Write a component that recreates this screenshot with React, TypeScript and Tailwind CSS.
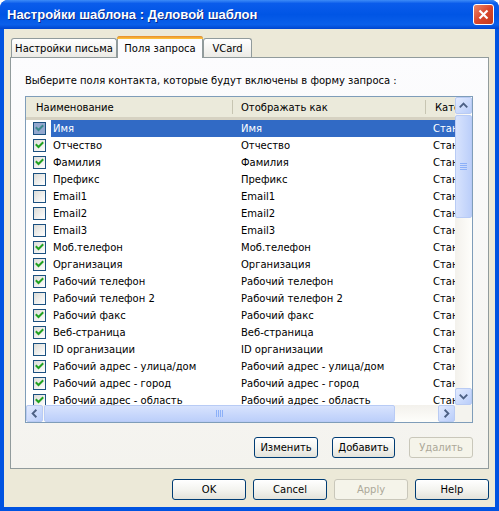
import React from 'react';

const rows: [string, boolean][] = [
  ['Имя', true],
  ['Отчество', true],
  ['Фамилия', true],
  ['Префикс', false],
  ['Email1', false],
  ['Email2', false],
  ['Email3', false],
  ['Моб.телефон', true],
  ['Организация', true],
  ['Рабочий телефон', true],
  ['Рабочий телефон 2', false],
  ['Рабочий факс', true],
  ['Веб-страница', true],
  ['ID организации', false],
  ['Рабочий адрес - улица/дом', true],
  ['Рабочий адрес - город', true],
  ['Рабочий адрес - область', true],
];

function Checkbox({ checked, active }: { checked: boolean; active?: boolean }) {
  return (
    <div
      className={
        active
          ? 'w-[13px] h-[13px] border border-[#1C5180] bg-[#93A8CE] flex items-center justify-center'
          : 'w-[13px] h-[13px] border border-[#1C5180] bg-gradient-to-br from-[#DCDCD7] to-white flex items-center justify-center'
      }
    >
      {checked && (
        <svg width="11" height="11" viewBox="0 0 11 11">
          <polyline
            points="2.5,5 4.5,7 8.5,3"
            fill="none"
            stroke={active ? '#3A8A8C' : '#21A121'}
            strokeWidth="2"
            strokeLinecap="square"
          />
        </svg>
      )}
    </div>
  );
}

function Chevron({ dir }: { dir: 'up' | 'down' | 'left' | 'right' }) {
  const pts = {
    up: '4,10 8,6 12,10',
    down: '4,6 8,10 12,6',
    left: '10,4 6,8 10,12',
    right: '6,4 10,8 6,12',
  }[dir];
  return (
    <svg width="15" height="15" viewBox="0 0 16 16">
      <polyline points={pts} fill="none" stroke="#4D6185" strokeWidth="2" />
    </svg>
  );
}

function ScrollBtn({ dir }: { dir: 'up' | 'down' | 'left' | 'right' }) {
  return (
    <div className="w-[17px] h-[17px] shrink-0 rounded-[2px] border border-[#B9CBF3] bg-gradient-to-br from-[#E3EBFE] to-[#B9CDFA] flex items-center justify-center">
      <Chevron dir={dir} />
    </div>
  );
}

function Btn({ label, disabled, className }: { label: string; disabled?: boolean; className: string }) {
  return (
    <div
      className={
        (disabled
          ? 'border-[#C9C7BA] text-[#ACA899] bg-[#F5F4EA] '
          : 'border-[#003C74] text-black bg-gradient-to-b from-white via-[#F4F4F0] to-[#E3E2DA] ') +
        'h-[21px] rounded-[3px] border flex items-center justify-center ' +
        className
      }
    >
      {label}
    </div>
  );
}

export default function App() {
  return (
    <div className="w-[499px] h-[511px] flex flex-col bg-[#0053E1] rounded-t-[8px] overflow-hidden font-['DejaVu_Sans',sans-serif] text-[10px] text-black">
      {/* Title bar */}
      <div className="h-[29px] shrink-0 flex items-center pl-[7px] pr-[5px] bg-[linear-gradient(to_bottom,#3D8BF7_0%,#0A5CEB_12%,#0055E5_50%,#0A5FEA_85%,#0045CF_100%)]">
        <span className="text-white font-['Liberation_Sans',sans-serif] font-bold text-[13px] [text-shadow:1px_1px_#0A2A8A] pt-[1px]">
          Настройки шаблона : Деловой шаблон
        </span>
        <div className="ml-auto w-[21px] h-[21px] rounded-[3px] border border-white bg-gradient-to-br from-[#E9866A] via-[#D9462C] to-[#C23A1E] flex items-center justify-center">
          <svg width="13" height="13" viewBox="0 0 13 13">
            <path d="M2.5 2.5 L10.5 10.5 M10.5 2.5 L2.5 10.5" stroke="white" strokeWidth="2.2" />
          </svg>
        </div>
      </div>

      {/* Body */}
      <div className="flex-1 mx-[4px] mb-[4px] bg-[#ECE9D8] flex flex-col pt-[7px] px-[6px]">
        {/* Tabs */}
        <div className="flex items-end h-[21px] pl-[1px]">
          <div className="w-[106px] h-[19px] rounded-t-[3px] border border-b-0 border-[#919B9C] bg-gradient-to-b from-white to-[#ECEBE6] flex items-center justify-center">
            Настройки письма
          </div>
          <div className="relative z-10 w-[86px] h-[22px] -mb-[1px] rounded-t-[3px] border border-b-0 border-[#919B9C] bg-[#FCFCFE] flex flex-col">
            <div className="h-[3px] -mx-[1px] -mt-[1px] rounded-t-[3px] bg-gradient-to-b from-[#E68B2C] to-[#FFC73C]" />
            <div className="flex-1 flex items-center justify-center pb-[1px]">Поля запроса</div>
          </div>
          <div className="w-[49px] h-[19px] rounded-t-[3px] border border-b-0 border-[#919B9C] bg-gradient-to-b from-white to-[#ECEBE6] flex items-center justify-center">
            VCard
          </div>
        </div>

        {/* Tab panel */}
        <div className="border border-[#919B9C] bg-gradient-to-b from-[#FCFCFE] to-[#F4F3EE] pt-[16px] pl-[14px] pr-[15px] pb-[10px] flex flex-col">
          <div className="h-[13px] leading-[13px] whitespace-nowrap">
            Выберите поля контакта, которые будут включены в форму запроса :
          </div>

          {/* List view */}
          <div className="mt-[9px] h-[327px] border border-[#7F9DB9] bg-white flex flex-col">
            <div className="flex h-[308px]">
              <div className="flex-1 flex flex-col overflow-hidden">
                {/* Header */}
                <div className="h-[23px] shrink-0 flex bg-[#EBEADB] border-b-[3px] border-[#D6D2C2] whitespace-nowrap">
                  <div className="w-[207px] shrink-0 flex items-center justify-between pl-[10px]">
                    <span>Наименование</span>
                    <div className="w-[1px] h-[14px] bg-[#C7C5B2]" />
                  </div>
                  <div className="w-[193px] shrink-0 flex items-center justify-between pl-[8px]">
                    <span>Отображать как</span>
                    <div className="w-[1px] h-[14px] bg-[#C7C5B2]" />
                  </div>
                  <div className="flex-1 flex items-center pl-[9px]">Категория</div>
                </div>
                {/* Rows */}
                {rows.map(([name, checked], i) => (
                  <div key={name} className="h-[17px] shrink-0 flex items-center whitespace-nowrap">
                    <div className="w-[25px] shrink-0 pl-[7px]">
                      <Checkbox checked={checked} active={i === 0} />
                    </div>
                    <div className={i === 0 ? 'flex-1 h-full flex items-center bg-[#316AC5] text-white' : 'flex-1 h-full flex items-center'}>
                      <div className="w-[182px] shrink-0 pl-[2px]">{name}</div>
                      <div className="w-[193px] shrink-0 pl-[8px]">{name}</div>
                      <div className="flex-1 pl-[7px] overflow-hidden">Стандартное</div>
                    </div>
                  </div>
                ))}
              </div>
              {/* Vertical scrollbar */}
              <div className="w-[17px] shrink-0 flex flex-col bg-gradient-to-r from-[#F3F1EC] to-[#FEFEFB]">
                <ScrollBtn dir="up" />
                <div className="mt-[1px] h-[103px] rounded-[2px] border border-[#B8CBF5] bg-gradient-to-r from-[#D8E3FD] to-[#BCCFFA] flex flex-col items-center justify-center gap-[1px]">
                  <div className="w-[7px] h-[1px] bg-[#8CB0F8]" />
                  <div className="w-[7px] h-[1px] bg-[#8CB0F8]" />
                  <div className="w-[7px] h-[1px] bg-[#8CB0F8]" />
                  <div className="w-[7px] h-[1px] bg-[#8CB0F8]" />
                </div>
                <div className="flex-1" />
                <ScrollBtn dir="down" />
              </div>
            </div>
            {/* Horizontal scrollbar */}
            <div className="h-[17px] flex">
              <div className="flex-1 flex bg-gradient-to-b from-[#F3F1EC] to-[#FEFEFB]">
                <ScrollBtn dir="left" />
                <div className="ml-[1px] w-[351px] rounded-[2px] border border-[#B8CBF5] bg-gradient-to-b from-[#D8E3FD] to-[#BCCFFA] flex items-center justify-center gap-[1px]">
                  <div className="w-[1px] h-[7px] bg-[#8CB0F8]" />
                  <div className="w-[1px] h-[7px] bg-[#8CB0F8]" />
                  <div className="w-[1px] h-[7px] bg-[#8CB0F8]" />
                  <div className="w-[1px] h-[7px] bg-[#8CB0F8]" />
                </div>
                <div className="flex-1" />
                <ScrollBtn dir="right" />
              </div>
              <div className="w-[17px] bg-[#F4F3EE]" />
            </div>
          </div>

          {/* Panel buttons */}
          <div className="mt-[14px] flex justify-end gap-[14px] pr-[0px]">
            <Btn label="Изменить" className="w-[64px]" />
            <Btn label="Добавить" className="w-[63px]" />
            <Btn label="Удалить" disabled className="w-[64px]" />
          </div>
        </div>

        {/* Dialog buttons */}
        <div className="mt-[10px] flex justify-end gap-[7px]">
          <Btn label="OK" className="w-[74px]" />
          <Btn label="Cancel" className="w-[74px]" />
          <Btn label="Apply" disabled className="w-[74px]" />
          <Btn label="Help" className="w-[74px]" />
        </div>
      </div>
    </div>
  );
}
